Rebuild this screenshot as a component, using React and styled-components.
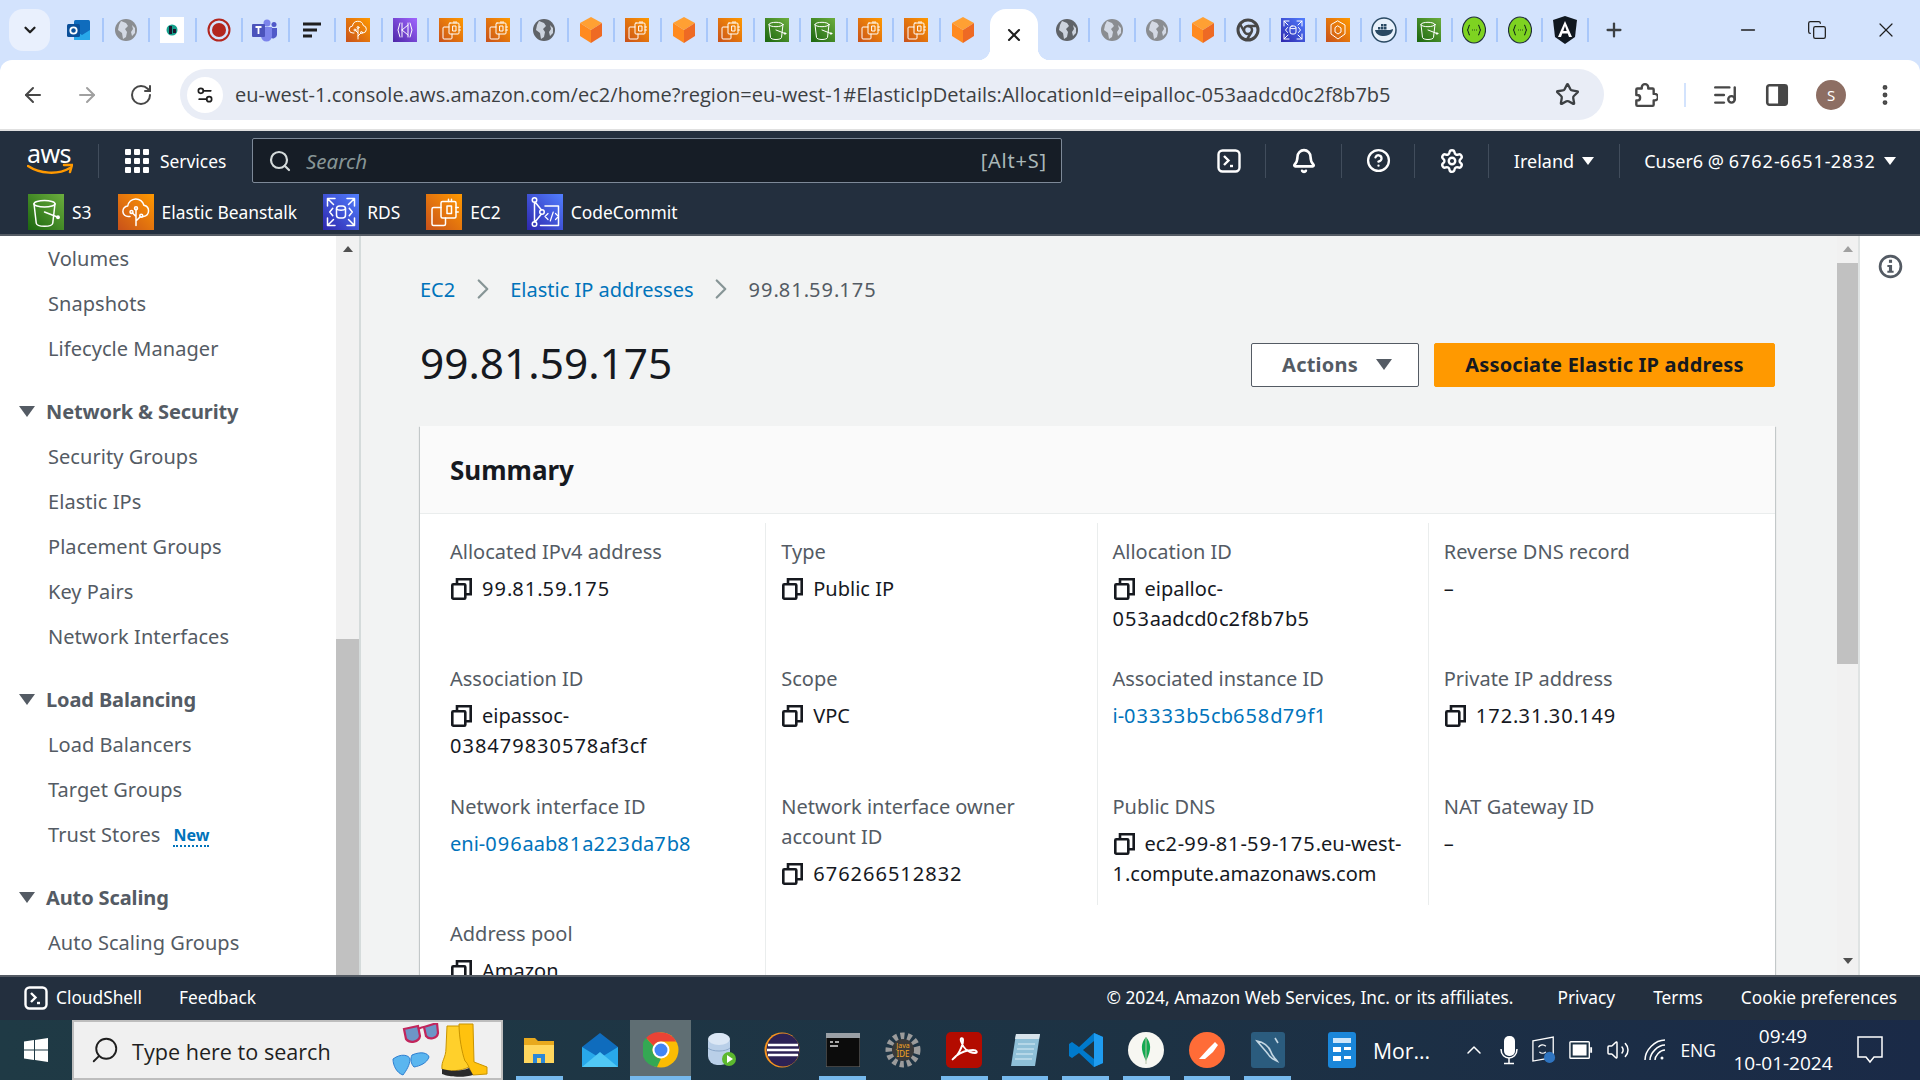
import React, { useId } from "react"
import styled, { createGlobalStyle } from "styled-components"
import {
  ArrowLeft,
  ArrowRight,
  Bell,
  ChevronDown,
  ChevronRight,
  ChevronUp,
  CircleHelp,
  Minus,
  MoreVertical,
  Plus,
  RotateCw,
  Search,
  Settings,
  Settings2,
  Star,
  Volume2,
  X,
  Copy,
  ListMusic,
} from "lucide-react"

const UI_FONT = `"Noto Sans", "Open Sans", sans-serif`
const CHROME_FONT = `"Open Sans", "Noto Sans", sans-serif`

const GlobalStyle = createGlobalStyle`
  html, body { margin: 0; padding: 0; background: #d3e3fd; }
  * { box-sizing: border-box; }
`

const Page = styled.div`
  width: 1920px;
  height: 1080px;
  overflow: hidden;
  display: flex;
  flex-direction: column;
  font-family: ${UI_FONT};
  background: #d3e3fd;
`

/* browser tab strip */
const TabStrip = styled.div`
  height: 60px;
  flex: none;
  display: flex;
  align-items: flex-start;
  padding: 9px 0 0 9px;
`
const TabMenu = styled.div`
  width: 41px;
  height: 42px;
  border-radius: 14px;
  background: #e9f0fd;
  margin-right: 7px;
  display: flex;
  align-items: center;
  justify-content: center;
  color: #1f1f1f;
`
const TabGroup = styled.div`
  display: flex;
  height: 42px;
  align-items: center;
`
const TabItem = styled.div`
  position: relative;
  width: ${(p) => p.$pitch}px;
  height: 24px;
  display: flex;
  align-items: center;
  justify-content: center;
  border-right: 2px solid #a8c7fa;
  &:last-child {
    border-right-color: ${(p) => (p.$edge ? "#a8c7fa" : "transparent")};
  }
`
const ActiveTab = styled.div`
  position: relative;
  width: 48px;
  height: 51px;
  margin: 0 7px 0 3px;
  background: #fff;
  border-radius: 16px 16px 0 0;
  display: flex;
  align-items: center;
  justify-content: center;
  color: #1f1f1f;
  &::before,
  &::after {
    content: "";
    position: absolute;
    bottom: 0;
    width: 12px;
    height: 12px;
  }
  &::before {
    left: -12px;
    background: radial-gradient(circle at 0 0, transparent 12px, #fff 12.5px);
  }
  &::after {
    right: -12px;
    background: radial-gradient(circle at 100% 0, transparent 12px, #fff 12.5px);
  }
`
const NewTab = styled.div`
  margin-left: 14px;
  height: 42px;
  display: flex;
  align-items: center;
  color: #3c4043;
`
const WindowButtons = styled.div`
  margin-left: auto;
  height: 42px;
  display: flex;
  align-items: center;
  gap: 47.5px;
  padding-right: 22px;
  color: #1f1f1f;
`

/* browser toolbar */
const Toolbar = styled.div`
  height: 71px;
  flex: none;
  background: #fff;
  border-radius: 12px 12px 0 0;
  border-bottom: 2px solid #e0e0e0;
  display: flex;
  align-items: center;
  padding: 0 0 0 21px;
  color: #474747;
`
const NavArrows = styled.div`
  width: 159px;
  display: flex;
  align-items: center;
  gap: 30px;
`
const UrlPill = styled.div`
  width: 1424px;
  height: 51px;
  border-radius: 26px;
  background: #e9edf6;
  display: flex;
  align-items: center;
  padding: 0 24px 0 7px;
`
const SiteBadge = styled.div`
  width: 36px;
  height: 36px;
  border-radius: 50%;
  background: #fff;
  display: flex;
  align-items: center;
  justify-content: center;
  margin-right: 12px;
  color: #1f1f1f;
`
const UrlText = styled.div`
  flex: 1;
  font-family: ${CHROME_FONT};
  font-size: 20px;
  letter-spacing: 0.03px;
  color: #3c4043;
  white-space: nowrap;
`
const ToolGroup = styled.div`
  display: flex;
  align-items: center;
  padding-left: 28px;
  gap: 26px;
  color: #474747;
`
const ToolSep = styled.div`
  width: 2px;
  height: 24px;
  background: #d3e3fd;
`
const Avatar = styled.div`
  width: 30px;
  height: 30px;
  border-radius: 50%;
  background: #8d6e63;
  color: #fff;
  font-size: 15px;
  display: flex;
  align-items: center;
  justify-content: center;
`

/* aws console nav */
const ConsoleNav = styled.div`
  flex: none;
  height: 105px;
  background: #232f3e;
  border-bottom: 2px solid #545b64;
  color: #fff;
`
const NavTop = styled.div`
  height: 59px;
  display: flex;
  align-items: center;
  padding: 0 0 0 27px;
`
const LogoBox = styled.div`
  width: 72px;
  height: 34px;
  display: flex;
  flex-direction: column;
  border-right: 1px solid #414d5c;
`
const LogoWord = styled.span`
  font-size: 25px;
  line-height: 19px;
  letter-spacing: -0.6px;
  color: #fff;
`
const ServicesButton = styled.div`
  width: 153px;
  display: flex;
  align-items: center;
  gap: 11px;
  padding-left: 26px;
  font-size: 17.4px;
  white-space: nowrap;
`
const SearchBox = styled.div`
  width: 810px;
  height: 45px;
  background: #161d26;
  border: 1px solid #7d8998;
  border-radius: 2px;
  display: flex;
  align-items: center;
  padding: 0 14px 0 15px;
  gap: 14px;
  color: #d5dbdb;
`
const SearchHint = styled.span`
  flex: 1;
  font-style: italic;
  font-size: 20.5px;
  color: #879596;
`
const SearchKeys = styled.span`
  font-size: 20px;
  letter-spacing: 0.8px;
  color: #aab7b8;
`
const NavRight = styled.div`
  margin-left: auto;
  display: flex;
  align-items: center;
  height: 36px;
`
const NavCell = styled.div`
  height: 34px;
  width: ${(p) => p.$w}px;
  display: flex;
  align-items: center;
  justify-content: center;
  gap: 8px;
  font-size: 18px;
  white-space: nowrap;
  border-right: ${(p) => (p.$last ? "none" : "1px solid #414d5c")};
`
const Caret = styled.span`
  display: inline-block;
  width: 0;
  height: 0;
  border-left: ${(p) => p.$s || 7}px solid transparent;
  border-right: ${(p) => p.$s || 7}px solid transparent;
  border-top: ${(p) => (p.$s || 7) * 1.45}px solid ${(p) => p.$c || "#fff"};
`
const Favorites = styled.div`
  height: 44px;
  display: flex;
  align-items: flex-start;
  padding: 4px 0 0 28px;
`
const Favorite = styled.div`
  display: flex;
  align-items: center;
  gap: 8px;
  margin-right: 26px;
  font-size: 17.4px;
  height: 36px;
  white-space: nowrap;
`

/* page body */
const Body = styled.div`
  flex: 1;
  min-height: 0;
  display: flex;
  background: #f2f3f3;
`
const Sidebar = styled.nav`
  width: 336px;
  flex: none;
  background: #fff;
  overflow: hidden;
  color: #545b64;
  font-size: 20px;
`
const SideItem = styled.div`
  height: 45px;
  display: flex;
  align-items: center;
  padding-left: 48px;
  gap: 13px;
  letter-spacing: 0.05px;
  white-space: nowrap;
`
const SideHead = styled.div`
  height: 45px;
  margin-top: 18px;
  display: flex;
  align-items: center;
  padding-left: 19px;
  gap: 11px;
  font-weight: 700;
  letter-spacing: -0.12px;
  white-space: nowrap;
`
const NewBadge = styled.span`
  color: #0073bb;
  font-size: 16px;
  font-weight: 700;
  border-bottom: 2px dotted #0073bb;
  line-height: 19px;
  margin-top: 4px;
`
const ScrollTrack = styled.div`
  width: ${(p) => p.$w}px;
  flex: none;
  background: ${(p) => p.$bg};
  border-right: ${(p) => p.$line};
  display: flex;
  flex-direction: column;
  align-items: center;
  padding-top: 10px;
`
const ScrollUp = styled.span`
  width: 0;
  height: 0;
  border-left: 5px solid transparent;
  border-right: 5px solid transparent;
  border-bottom: 6px solid ${(p) => p.$c};
`
const ScrollDown = styled.span`
  width: 0;
  height: 0;
  margin-top: auto;
  margin-bottom: 11px;
  border-left: 5px solid transparent;
  border-right: 5px solid transparent;
  border-top: 6px solid #505050;
`
const ScrollThumb = styled.div`
  width: 100%;
  flex: none;
  height: ${(p) => p.$h}px;
  margin-top: ${(p) => p.$top}px;
  background: #c1c1c1;
`
const Main = styled.main`
  flex: 1;
  min-width: 0;
  overflow: hidden;
  padding: 0 62px 0 59px;
`
const Breadcrumbs = styled.div`
  height: 30px;
  margin-top: 38px;
  display: flex;
  align-items: center;
  gap: 10.5px;
  font-size: 20px;
  color: #545b64;
`
const Crumb = styled.a`
  color: #0073bb;
`
const HeaderRow = styled.div`
  height: 44px;
  margin-top: 39px;
  display: flex;
  align-items: center;
`
const Title = styled.h1`
  margin: -5px 0 0;
  flex: 1;
  font-size: 42.4px;
  font-weight: 400;
  color: #16191f;
`
const Button = styled.div`
  height: 44px;
  display: flex;
  align-items: center;
  justify-content: center;
  gap: 18px;
  padding: 0 0 2px ${(p) => (p.$primary ? 0 : 4)}px;
  border-radius: 2px;
  font-size: 20px;
  font-weight: 700;
  letter-spacing: 0.2px;
  width: ${(p) => p.$w}px;
  margin-left: 15px;
  background: ${(p) => (p.$primary ? "#ff9900" : "#fff")};
  color: ${(p) => (p.$primary ? "#16191f" : "#545b64")};
  border: 1px solid ${(p) => (p.$primary ? "#ff9900" : "#545b64")};
`
const Card = styled.section`
  margin-top: 39px;
  background: #fff;
  box-shadow: 0 1px 1px 0 rgba(0, 28, 36, 0.3), 1px 1px 1px 0 rgba(0, 28, 36, 0.15), -1px 1px 1px 0 rgba(0, 28, 36, 0.15);
`
const CardHead = styled.header`
  height: 88px;
  display: flex;
  align-items: center;
  padding-left: 30px;
  background: #fafafa;
  border-bottom: 1px solid #eaeded;
  font-size: 26px;
  font-weight: 700;
  color: #16191f;
`
const DetailGrid = styled.div`
  display: grid;
  grid-template-columns: repeat(4, 331.25px);
  padding: 9px 15px 0;
`
const Cell = styled.div`
  padding: 14px 15px 0;
  height: 127.25px;
  font-size: 20px;
  line-height: 30px;
  color: #16191f;
  border-right: ${(p) => (p.$last ? "none" : "1px solid #eaeded")};
`
const Label = styled.div`
  color: #545b64;
  margin-bottom: 7px;
`
const Value = styled.div``
const CopyGlyph = styled.span`
  display: inline-flex;
  vertical-align: -4px;
  margin: 0 10px 0 1px;
`
const ValueLink = styled.a`
  color: #0073bb;
`
const Num = styled.span`
  letter-spacing: 1px;
`
const RightRail = styled.aside`
  width: 62px;
  flex: none;
  background: #fff;
  border-left: 2px solid #dfe3e3;
  display: flex;
  justify-content: center;
  padding-top: 18px;
`

/* console footer */
const Footer = styled.footer`
  flex: none;
  height: 45px;
  background: #232f3e;
  border-top: 2px solid #545b64;
  color: #fff;
  font-size: 17.3px;
  display: flex;
  align-items: center;
  padding: 0 23px 2px 24px;
`
const FooterShell = styled.div`
  display: flex;
  align-items: center;
  gap: 8px;
  margin-right: 37px;
`
const FooterLinks = styled.div`
  margin-left: auto;
  display: flex;
  align-items: center;
  gap: 38px;
`
const Copyright = styled.span`
  margin-right: 6px;
`

/* windows taskbar */
const Taskbar = styled.div`
  flex: none;
  height: 60px;
  background: linear-gradient(90deg, #1f3a45 0%, #1d3244 60%, #1a2a47 100%);
  display: flex;
  align-items: center;
  color: #fff;
`
const StartCell = styled.div`
  width: 72px;
  display: flex;
  justify-content: center;
`
const TaskSearch = styled.div`
  width: 431px;
  height: 60px;
  background: #f0f0f0;
  border: 2px solid #bdbdbd;
  display: flex;
  align-items: center;
  padding: 0 11px 0 16px;
  color: #1f1f1f;
  font-size: 21.6px;
  margin-right: 6px;
`
const TaskSearchText = styled.span`
  flex: 1;
  margin-left: 12px;
  padding-top: 2px;
  font-family: ${CHROME_FONT};
  white-space: nowrap;
`
const TaskSlot = styled.div`
  position: relative;
  width: 60.7px;
  height: 60px;
  display: flex;
  align-items: center;
  justify-content: center;
  background: ${(p) => (p.$active ? "#5f6e73" : "transparent")};
  &::after {
    content: "";
    display: ${(p) => (p.$running ? "block" : "none")};
    position: absolute;
    left: ${(p) => (p.$active ? 0 : 7)}px;
    right: ${(p) => (p.$active ? 0 : 7)}px;
    bottom: 0;
    height: 4px;
    background: #76b9ed;
  }
`
const NewsWidget = styled.div`
  margin-left: 30px;
  display: flex;
  align-items: center;
  gap: 15px;
  font-family: ${CHROME_FONT};
  font-size: 21.2px;
  white-space: nowrap;
`
const Tray = styled.div`
  margin-left: auto;
  display: flex;
  align-items: center;
  gap: 13px;
  padding-right: 35px;
`
const TrayText = styled.span`
  font-family: ${CHROME_FONT};
  font-size: 17.5px;
`
const Clock = styled.div`
  width: 100px;
  margin: 0 9px 0 4px;
  text-align: center;
  font-family: ${CHROME_FONT};
  font-size: 19px;
  line-height: 27px;
`

function Tile({ colors, size = 24, children }) {
  const id = useId()
  return (
    <svg width={size} height={size} viewBox="0 0 24 24">
      <defs>
        <linearGradient id={id} x1="0" y1="1" x2="1" y2="0">
          <stop offset="0" stopColor={colors[0]} />
          <stop offset="1" stopColor={colors[1]} />
        </linearGradient>
      </defs>
      <rect width="24" height="24" fill={`url(#${id})`} />
      <g fill="none" stroke="#fff" strokeWidth="1" strokeLinecap="round" strokeLinejoin="round">
        {children}
      </g>
    </svg>
  )
}

const ORANGE = ["#c8511b", "#ff9900"]
const GREEN = ["#1b660f", "#6cae3e"]
const BLUE = ["#2e27ad", "#527fff"]
const PURPLE = ["#4d27a8", "#a166ff"]

const Ec2Tile = ({ size }) => (
  <Tile colors={ORANGE} size={size}>
    <rect x="10" y="5" width="10" height="11" rx="1" />
    <path d="M14 8h3v5h-3zM15 5V3.500M17 5V3.500M20 9h1.500M20 12h1.500" />
    <path d="M10 9H5a1 1 0 0 0-1 1v10a1 1 0 0 0 1 1h7a1 1 0 0 0 1-1v-4" />
  </Tile>
)
const S3Tile = ({ size }) => (
  <Tile colors={GREEN} size={size}>
    <ellipse cx="11" cy="6.500" rx="7" ry="2.200" />
    <path d="M4 6.500l1.500 13c.2 1.200 2.500 2 5.500 2s5.300-.8 5.500-2L18 6.500" />
    <path d="M11 12l9 3.500" />
    <circle cx="20" cy="15.500" r=".8" fill="#fff" />
  </Tile>
)
const BeanstalkTile = ({ size }) => (
  <Tile colors={ORANGE} size={size}>
    <path d="M8 15H7a3.500 3.500 0 0 1-.5-7 5.500 5.500 0 0 1 10.800-.5A3.800 3.800 0 0 1 17 15h-1" />
    <path d="M12 21V10M12 15l-2.500-2.500M12 18l3-3" />
    <circle cx="12" cy="9.500" r="1" />
    <circle cx="9" cy="12" r="1" />
    <circle cx="15.500" cy="14.500" r="1" />
  </Tile>
)
const RdsTile = ({ size }) => (
  <Tile colors={BLUE} size={size}>
    <path d="M3 8V3h5M3 3l4 4M21 8V3h-5M21 3l-4 4M3 16v5h5M3 21l4-4M21 16v5h-5M21 21l-4-4" />
    <rect x="9" y="8" width="6" height="8" rx="2" />
    <path d="M9 10c1 1 5 1 6 0M6.500 9.500L4.500 12l2 2.500M17.500 9.500l2 2.500-2 2.500" />
  </Tile>
)
const CommitTile = ({ size }) => (
  <Tile colors={BLUE} size={size}>
    <circle cx="5" cy="4" r="1.500" />
    <circle cx="5" cy="20" r="1.500" />
    <circle cx="10" cy="12" r="1.500" />
    <path d="M5 5.500v13M5.500 5.500l4 5M9.500 13.500l-4 5M12 8h9v13h-12" />
    <path d="M14 13l-2 2 2 2M19 13l2 2-2 2M17.500 12l-2 6" strokeWidth=".8" />
  </Tile>
)
const KinesisTile = () => (
  <Tile colors={PURPLE}>
    <path d="M7 5L5 12l2 7M17 5l2 7-2 7M9 5v14M15 5v14M9 12l6-5M9 12l6 5" />
  </Tile>
)
const EcsTile = () => (
  <Tile colors={ORANGE}>
    <path d="M12 3l7 4v9l-7 5-7-5V7z" />
    <path d="M12 8l3 2v4l-3 2-3-2v-4z" />
  </Tile>
)

const GlobeIcon = ({ shade }) => (
  <svg width="24" height="24" viewBox="0 0 24 24">
    <circle cx="12" cy="12" r="11" fill={shade} />
    <path d="M7 3l5 2 2 3-3 3 2 3-1 5-3 2-1-6-4-3 1-5zM18 7l3 3v5l-3 3-1-4 2-3z" fill="#dfe6f2" opacity=".85" />
  </svg>
)
const CubeIcon = () => (
  <svg width="24" height="28" viewBox="0 0 24 28">
    <path d="M12 1l11 6-11 7L1 7z" fill="#ffa033" />
    <path d="M1 7l11 7v13L1 20z" fill="#ff8a1f" />
    <path d="M23 7L12 14v13l11-7z" fill="#ee6a24" />
  </svg>
)
const OutlookIcon = () => (
  <svg width="24" height="24" viewBox="0 0 24 24">
    <rect x="7" y="2" width="16" height="20" rx="1.500" fill="#0f6cbd" />
    <path d="M7 12l8 5 8-5v9a1 1 0 0 1-1 1H8a1 1 0 0 1-1-1z" fill="#28a8ea" />
    <rect x="0" y="6" width="13" height="13" rx="1.500" fill="#0a4f99" />
    <circle cx="6.500" cy="12.500" r="3.200" fill="none" stroke="#fff" strokeWidth="1.800" />
  </svg>
)
const QrIcon = () => (
  <svg width="24" height="26" viewBox="0 0 24 26">
    <rect width="24" height="26" fill="#fff" />
    <circle cx="12" cy="13" r="5.500" fill="#14a08c" />
    <path d="M9 9h3v8H9zM13 12h3v4h-3z" fill="#1a1a2e" />
  </svg>
)
const RecordIcon = () => (
  <svg width="24" height="24" viewBox="0 0 24 24">
    <circle cx="12" cy="12" r="10.500" fill="none" stroke="#b3261e" strokeWidth="2" />
    <circle cx="12" cy="12" r="7" fill="#b3261e" />
  </svg>
)
const TeamsIcon = () => (
  <svg width="26" height="24" viewBox="0 0 26 24">
    <circle cx="15" cy="5" r="3.500" fill="#7b83eb" />
    <circle cx="22" cy="6.500" r="2.500" fill="#5059c9" />
    <path d="M18 10h7v7a4 4 0 0 1-7 2z" fill="#5059c9" />
    <path d="M9 9h11v9a5 5 0 0 1-11 0z" fill="#7b83eb" />
    <rect x="0" y="6" width="13" height="13" rx="1" fill="#4b53bc" />
    <path d="M3.500 9h6M6.500 9v7" stroke="#fff" strokeWidth="1.800" />
  </svg>
)
const LinesIcon = () => (
  <svg width="24" height="24" viewBox="0 0 24 24">
    <path d="M3 6h18M3 12h14M3 18h9" stroke="#1f1f1f" strokeWidth="3" />
  </svg>
)
const ChromeMono = () => (
  <svg width="24" height="24" viewBox="0 0 24 24">
    <circle cx="12" cy="12" r="10" fill="none" stroke="#474747" strokeWidth="3" />
    <circle cx="12" cy="12" r="4" fill="none" stroke="#474747" strokeWidth="2.500" />
    <path d="M12 8h9M8.500 14L4 6M15.500 14L11 21.500" stroke="#474747" strokeWidth="2.500" />
  </svg>
)
const DockerTab = () => (
  <svg width="26" height="26" viewBox="0 0 26 26">
    <circle cx="13" cy="13" r="12" fill="#e8f1fb" stroke="#2a4a63" strokeWidth="1.500" />
    <path d="M4 13h15c1 0 2-1 3-1 0 3-3 7-9 7-5 0-8-2-9-6z" fill="#2a4a63" />
    <path d="M7 10h2.500v2.500H7zM10 10h2.500v2.500H10zM13 10h2.500v2.500H13zM10 7h2.500v2.500H10zM13 7h2.500v2.500H13z" fill="#2a4a63" />
  </svg>
)
const BracesGreen = () => (
  <svg width="24" height="28" viewBox="0 0 24 28">
    <ellipse cx="12" cy="14" rx="11.500" ry="13" fill="#7ed321" stroke="#1f2d3d" strokeWidth="1.200" />
    <path d="M8 9c-2 0-1 5-3 5 2 0 1 5 3 5M16 9c2 0 1 5 3 5-2 0-1 5-3 5M10 14h.8M12 14h.8M14 14h.8" fill="none" stroke="#16301a" strokeWidth="1.200" />
  </svg>
)
const AngularIcon = () => (
  <svg width="24" height="28" viewBox="0 0 24 28">
    <path d="M12 0l12 4-2 17-10 7-10-7L0 4z" fill="#101820" />
    <path d="M12 5l7 16h-3l-1.300-3.500H9.300L8 21H5zM12 10l-1.700 5h3.400z" fill="#fff" />
  </svg>
)

const tabsBefore = [
  <OutlookIcon />, <GlobeIcon shade="#8a8d91" />, <QrIcon />, <RecordIcon />, <TeamsIcon />, <LinesIcon />,
  <BeanstalkTile />, <KinesisTile />, <Ec2Tile />, <Ec2Tile />, <GlobeIcon shade="#5f6368" />, <CubeIcon />,
  <Ec2Tile />, <CubeIcon />, <Ec2Tile />, <S3Tile />, <S3Tile />, <Ec2Tile />, <Ec2Tile />, <CubeIcon />,
]
const tabsAfter = [
  <GlobeIcon shade="#5f6368" />, <GlobeIcon shade="#8a8d91" />, <GlobeIcon shade="#8a8d91" />, <CubeIcon />,
  <ChromeMono />, <RdsTile />, <EcsTile />, <DockerTab />, <S3Tile />, <BracesGreen />, <BracesGreen />, <AngularIcon />,
]

const AwsSmile = () => (
  <svg width="46" height="15" viewBox="0 0 46 15">
    <path d="M1 3c12 8 30 9 42 2" fill="none" stroke="#ff9900" strokeWidth="2.500" strokeLinecap="round" />
    <path d="M37 2l8 0-2 7" fill="none" stroke="#ff9900" strokeWidth="2.500" strokeLinecap="round" />
  </svg>
)
const GridIcon = () => (
  <svg width="24" height="24" viewBox="0 0 24 24" fill="#fff">
    {[0, 9, 18].map((y) =>
      [0, 9, 18].map((x) => <rect key={`${x}-${y}`} x={x} y={y} width="6" height="6" rx="1" />)
    )}
  </svg>
)
const ShellIcon = () => (
  <svg width="24" height="24" viewBox="0 0 24 24" fill="none" stroke="#fff">
    <rect x="1.500" y="1.500" width="21" height="21" rx="4" strokeWidth="2.400" />
    <path d="M7 7l4.500 4.500L7 16" strokeWidth="2.400" />
    <path d="M13 17h3" strokeWidth="2.400" />
  </svg>
)
const PuzzleIcon = () => (
  <svg width="26" height="26" viewBox="0 0 24 24" fill="none" stroke="#474747" strokeWidth="2.200" strokeLinejoin="round">
    <path d="M5 6h4V5a3 3 0 0 1 6 0v1h4a1 1 0 0 1 1 1v4h1a3 3 0 0 1 0 6h-1v4a1 1 0 0 1-1 1H5a1 1 0 0 1-1-1v-4h1a2.500 2.500 0 0 0 0-5H4V7a1 1 0 0 1 1-1z" />
  </svg>
)
const SidePanelIcon = () => (
  <svg width="26" height="26" viewBox="0 0 24 24">
    <rect x="3" y="3" width="18" height="18" rx="2" fill="none" stroke="#474747" strokeWidth="2.400" />
    <rect x="13" y="3" width="8" height="18" fill="#474747" />
  </svg>
)
const InfoIcon = () => (
  <svg width="25" height="25" viewBox="0 0 24 24">
    <circle cx="12" cy="12" r="10" fill="none" stroke="#545b64" strokeWidth="2.600" />
    <rect x="10.500" y="5.500" width="3" height="3" fill="#545b64" />
    <path d="M9 10.500h4.500V16H15v2H9v-2h1.500v-3.500H9z" fill="#545b64" />
  </svg>
)
const CopyValueIcon = () => (
  <svg width="21" height="22" viewBox="0 0 21 22" fill="none" stroke="#16191f" strokeWidth="2.600">
    <rect x="1.300" y="6.300" width="13" height="14.400" rx="1" />
    <path d="M6 6V1.300h13.700v15H14.500" />
  </svg>
)

const FolderIcon = () => (
  <svg width="34" height="34" viewBox="0 0 34 34">
    <path d="M2 5h11l3 3h16v22H2z" fill="#e8a91d" />
    <path d="M2 12h30v18H2z" fill="#ffd75e" />
    <path d="M11 30v-9h12v9h-4v-5h-4v5z" fill="#2b88d8" />
  </svg>
)
const MailIcon = () => (
  <svg width="36" height="36" viewBox="0 0 36 36">
    <path d="M18 1L0 15v20h36V15z" fill="#0f6cbd" />
    <path d="M0 15l18 11 18-11v20H0z" fill="#28a8ea" />
    <path d="M0 35l18-15 18 15z" fill="#50c8f5" />
  </svg>
)
const ChromeIcon = () => (
  <svg width="36" height="36" viewBox="0 0 36 36">
    <circle cx="18" cy="18" r="17.500" fill="#fbbc04" />
    <path d="M18 .5A17.500 17.500 0 0 1 33.200 9.500H18a8.500 8.500 0 0 0-7.500 4.500L3 6A17.500 17.500 0 0 1 18 .5z" fill="#ea4335" />
    <path d="M3 6l7.500 8a8.500 8.500 0 0 0 7.500 12.500L14 35A17.500 17.500 0 0 1 3 6z" fill="#34a853" />
    <circle cx="18" cy="18" r="8.500" fill="#fff" />
    <circle cx="18" cy="18" r="6.500" fill="#4285f4" />
  </svg>
)
const DbIcon = () => (
  <svg width="30" height="38" viewBox="0 0 30 38">
    <rect x="2" y="2" width="22" height="32" rx="9" fill="#b9cfe8" />
    <ellipse cx="13" cy="8" rx="11" ry="6" fill="#dbe7f5" />
    <path d="M2 17c4 4 18 4 22 0" stroke="#8aa7c9" fill="none" />
    <circle cx="23" cy="28" r="7" fill="#5cb82e" />
    <path d="M21 24v8l6-4z" fill="#fff" />
  </svg>
)
const EclipseIcon = () => (
  <svg width="36" height="36" viewBox="0 0 36 36">
    <circle cx="18" cy="18" r="17.500" fill="#f7941e" />
    <circle cx="19" cy="18" r="16.500" fill="#2c2255" />
    <path d="M4 13h30M3 18h32M4 23h30" stroke="#fff" strokeWidth="2.500" />
  </svg>
)
const CmdIcon = () => (
  <svg width="34" height="34" viewBox="0 0 34 34">
    <rect width="34" height="34" fill="#0c0c0c" stroke="#777" />
    <rect width="34" height="5" fill="#9aa0a6" />
    <path d="M4 9h3M9 9h4M4 13h8" stroke="#ddd" strokeWidth="1.500" />
  </svg>
)
const JavaGear = () => (
  <svg width="38" height="38" viewBox="0 0 38 38">
    <circle cx="19" cy="19" r="14" fill="none" stroke="#9b9b9b" strokeWidth="7" strokeDasharray="4 3" />
    <circle cx="19" cy="19" r="11" fill="#3a3a3a" />
    <text x="19" y="17" textAnchor="middle" fontSize="7" fill="#f5a623" fontFamily="Noto Sans, sans-serif">Java</text>
    <text x="19" y="26" textAnchor="middle" fontSize="8" fill="#f5a623" fontFamily="Noto Sans, sans-serif">IDE</text>
  </svg>
)
const AdobeIcon = () => (
  <svg width="36" height="36" viewBox="0 0 36 36">
    <rect width="36" height="36" rx="5" fill="#b30b00" />
    <path d="M7 27c5-3 10-13 10-19 0-3-3-2-2 1 2 7 7 12 14 12 3 0 2-3-2-3-6 0-13 3-17 6-3 3-4 4-3 3z" fill="none" stroke="#fff" strokeWidth="2" />
  </svg>
)
const NotepadIcon = () => (
  <svg width="32" height="36" viewBox="0 0 32 36">
    <path d="M7 2h24l-5 32H2z" fill="#8fc0d8" />
    <path d="M7 2h24l-1 5H6z" fill="#d8e4ec" />
    <path d="M9 12h17M8 17h17M7 22h17M6 27h17" stroke="#dbeef7" />
  </svg>
)
const VsCodeIcon = () => (
  <svg width="36" height="36" viewBox="0 0 36 36">
    <path d="M26 1l9 4v26l-9 4-15-14-7 5-3-2v-12l3-2 7 5z" fill="#007acc" />
    <path d="M26 9L15 18l11 9z" fill="#1f3644" />
    <path d="M26 1l9 4v26l-9 4z" fill="#1f9cf0" />
  </svg>
)
const MongoIcon = () => (
  <svg width="36" height="36" viewBox="0 0 36 36">
    <circle cx="18" cy="18" r="18" fill="#f7f7f2" />
    <path d="M18 5c5 6 6 12 0 24-6-12-5-18 0-24z" fill="#13aa52" />
    <path d="M18 5v27" stroke="#b8c4a8" strokeWidth="1" />
  </svg>
)
const PostmanIcon = () => (
  <svg width="36" height="36" viewBox="0 0 36 36">
    <circle cx="18" cy="18" r="18" fill="#ff6c37" />
    <path d="M10 27l10-11 4 4-8 7M20 16l6-6 3 3-5 7" fill="#fff" />
  </svg>
)
const MysqlIcon = () => (
  <svg width="34" height="36" viewBox="0 0 34 36">
    <rect width="34" height="36" rx="3" fill="#2b5c7e" />
    <path d="M6 9c6 1 12 5 14 11 1 4 4 6 6 9-4-2-7-3-9-7-3-4-7-8-11-13zM24 6l3 5" fill="none" stroke="#c4d7e3" strokeWidth="1.600" />
  </svg>
)
const NewsIcon = () => (
  <svg width="30" height="36" viewBox="0 0 30 36">
    <rect width="28" height="36" rx="3" fill="#1a86d9" />
    <rect x="5" y="6" width="18" height="5" fill="#cde6fa" />
    <rect x="5" y="15" width="8" height="5" fill="#fff" />
    <rect x="5" y="24" width="8" height="5" fill="#fff" />
    <rect x="16" y="15" width="7" height="3" fill="#fff" />
    <rect x="16" y="24" width="7" height="3" fill="#fff" />
  </svg>
)
const WindowsLogo = () => (
  <svg width="24" height="24" viewBox="0 0 24 24" fill="#fff">
    <path d="M0 3.500l10-1.500v9.500H0zM11 2l13-2v11.500H11zM0 12.500h10V22L0 20.500zM11 12.500h13V24l-13-2z" />
  </svg>
)
const SummerArt = () => (
  <svg width="98" height="54" viewBox="0 0 98 54">
    <path d="M12 6l14-3 2 10c-1 6-10 8-14 3zM32 4l13-4 1 10c-1 6-9 7-12 3z" fill="#6d95c7" stroke="#c2255c" strokeWidth="2.200" />
    <path d="M26 6c2-1 4-2 6-2" stroke="#c2255c" strokeWidth="2" fill="none" />
    <path d="M1 36c8-6 16-4 17 0 0 6-4 12-7 16C5 50 1 43 1 36zM20 32c9-4 16-2 17 2-2 6-9 9-15 10-3-3-4-8-2-12z" fill="#5bb6ef" stroke="#2f7fd0" />
    <path d="M55 3h13c0 14 2 24 9 33v8c-8 4-20 5-27 2-1-8 4-11 4-21z" fill="#ffd02b" stroke="#c99400" />
    <path d="M67 1h14l1 38 13 5v7l-14 1c-3-4-5-12-8-14-3-8-6-24-6-37z" fill="#ffc20e" stroke="#c99400" />
    <path d="M50 46c10 3 20 2 27-1l4 7c-9 3-24 2-31-1z" fill="#2b2b2b" />
  </svg>
)
const MicIcon = () => (
  <svg width="20" height="30" viewBox="0 0 20 30" fill="#fff">
    <rect x="5" y="1" width="11" height="20" rx="5" />
    <path d="M2 14c0 12 16 12 16 0" fill="none" stroke="#fff" strokeWidth="1.500" />
    <path d="M10 23v5M5 28.500h10" stroke="#fff" strokeWidth="1.500" />
  </svg>
)
const SyncTray = () => (
  <svg width="24" height="30" viewBox="0 0 26 30" fill="none" stroke="#fff" strokeWidth="1.400">
    <path d="M1 5l22-4v22L1 27z" />
    <path d="M7 12a5 5 0 0 1 8-1M15 17a5 5 0 0 1-7 0" />
    <circle cx="19" cy="23" r="6" fill="#2f74c0" stroke="none" />
  </svg>
)
const BatteryTray = () => (
  <svg width="24" height="20" viewBox="0 0 26 20">
    <rect x="1" y="1" width="21" height="18" rx="1" fill="#1d3244" stroke="#fff" strokeWidth="1.500" />
    <rect x="4" y="4" width="15" height="12" fill="#fff" />
    <rect x="23" y="7" width="2" height="6" fill="#fff" />
  </svg>
)
const WifiTray = () => (
  <svg width="24" height="24" viewBox="0 0 24 24" fill="none" stroke="#fff" strokeWidth="1.500">
    <path d="M2 22C2 12 12 2 22 2M7 22c0-7 8-15 15-15M12 22c0-4 5-10 10-10" />
    <circle cx="19" cy="20" r="1.500" fill="#fff" stroke="none" />
  </svg>
)
const BubbleTray = () => (
  <svg width="30" height="30" viewBox="0 0 30 30" fill="none" stroke="#fff" strokeWidth="1.500">
    <path d="M3 2h24v20h-8l-4 5-4-5H3z" />
  </svg>
)

// the digits of the reference font run wider than the ones we have
const withNums = (text) =>
  String(text)
    .split(/(\d+)/)
    .map((part, i) => (/^\d/.test(part) ? <Num key={i}>{part}</Num> : part))

function CopyValue({ children }) {
  return (
    <Value>
      <CopyGlyph>
        <CopyValueIcon />
      </CopyGlyph>
      {withNums(children)}
    </Value>
  )
}

const details = [
  { label: "Allocated IPv4 address", copy: "99.81.59.175" },
  { label: "Type", copy: "Public IP" },
  { label: "Allocation ID", copy: "eipalloc-053aadcd0c2f8b7b5" },
  { label: "Reverse DNS record", text: "–" },
  { label: "Association ID", copy: "eipassoc-038479830578af3cf" },
  { label: "Scope", copy: "VPC" },
  { label: "Associated instance ID", link: "i-03333b5cb658d79f1" },
  { label: "Private IP address", copy: "172.31.30.149" },
  { label: "Network interface ID", link: "eni-096aab81a223da7b8" },
  { label: "Network interface owner account ID", copy: "676266512832" },
  { label: "Public DNS", copy: "ec2-99-81-59-175.eu-west-1.compute.amazonaws.com" },
  { label: "NAT Gateway ID", text: "–" },
  { label: "Address pool", copy: "Amazon" },
]

const sideGroups = [
  { items: ["Volumes", "Snapshots", "Lifecycle Manager"] },
  { head: "Network & Security", items: ["Security Groups", "Elastic IPs", "Placement Groups", "Key Pairs", "Network Interfaces"] },
  { head: "Load Balancing", items: ["Load Balancers", "Target Groups", "Trust Stores"] },
  { head: "Auto Scaling", items: ["Auto Scaling Groups"] },
]

export default function App() {
  return (
    <Page>
      <GlobalStyle />
      <TabStrip>
        <TabMenu>
          <ChevronDown size={18} strokeWidth={3} />
        </TabMenu>
        <TabGroup>
          {tabsBefore.map((icon, i) => (
            <TabItem key={i} $pitch={46.5}>{icon}</TabItem>
          ))}
        </TabGroup>
        <ActiveTab>
          <X size={20} strokeWidth={2.500} />
        </ActiveTab>
        <TabGroup>
          {tabsAfter.map((icon, i) => (
            <TabItem key={i} $pitch={45.3} $edge>{icon}</TabItem>
          ))}
        </TabGroup>
        <NewTab>
          <Plus size={22} strokeWidth={2.500} />
        </NewTab>
        <WindowButtons>
          <Minus size={22} strokeWidth={1.500} />
          <Copy size={20} strokeWidth={1.500} />
          <X size={24} strokeWidth={1.200} />
        </WindowButtons>
      </TabStrip>

      <Toolbar>
        <NavArrows>
          <ArrowLeft size={24} />
          <ArrowRight size={24} color="#a0a0a0" />
          <RotateCw size={24} />
        </NavArrows>
        <UrlPill>
          <SiteBadge>
            <Settings2 size={20} />
          </SiteBadge>
          <UrlText>eu-west-1.console.aws.amazon.com/ec2/home?region=eu-west-1#ElasticIpDetails:AllocationId=eipalloc-053aadcd0c2f8b7b5</UrlText>
          <Star size={25} strokeWidth={2.200} color="#3c4043" />
        </UrlPill>
        <ToolGroup>
          <PuzzleIcon />
          <ToolSep />
          <ListMusic size={26} strokeWidth={2.200} />
          <SidePanelIcon />
          <Avatar>S</Avatar>
          <MoreVertical size={26} strokeWidth={2.500} />
        </ToolGroup>
      </Toolbar>

      <ConsoleNav>
        <NavTop>
          <LogoBox>
            <LogoWord>aws</LogoWord>
            <AwsSmile />
          </LogoBox>
          <ServicesButton>
            <GridIcon />
            Services
          </ServicesButton>
          <SearchBox>
            <Search size={24} strokeWidth={2.200} />
            <SearchHint>Search</SearchHint>
            <SearchKeys>[Alt+S]</SearchKeys>
          </SearchBox>
          <NavRight>
            <NavCell $w={73}>
              <ShellIcon />
            </NavCell>
            <NavCell $w={76}>
              <Bell size={26} strokeWidth={2.400} />
            </NavCell>
            <NavCell $w={73}>
              <CircleHelp size={25} strokeWidth={2.200} />
            </NavCell>
            <NavCell $w={74}>
              <Settings size={26} strokeWidth={2.200} />
            </NavCell>
            <NavCell $w={131}>
              Ireland <Caret $s={6} />
            </NavCell>
            <NavCell $w={300} $last>
              <span>Cuser6 @ {withNums("6762-6651-2832")}</span> <Caret $s={6} />
            </NavCell>
          </NavRight>
        </NavTop>
        <Favorites>
          <Favorite><S3Tile size={36} />S3</Favorite>
          <Favorite><BeanstalkTile size={36} />Elastic Beanstalk</Favorite>
          <Favorite><RdsTile size={36} />RDS</Favorite>
          <Favorite><Ec2Tile size={36} />EC2</Favorite>
          <Favorite><CommitTile size={36} />CodeCommit</Favorite>
        </Favorites>
      </ConsoleNav>

      <Body>
        <Sidebar>
          {sideGroups.map((group, i) => (
            <React.Fragment key={i}>
              {group.head && (
                <SideHead>
                  <Caret $s={8} $c="#545b64" />
                  {group.head}
                </SideHead>
              )}
              {group.items.map((item) => (
                <SideItem key={item}>
                  {item}
                  {item === "Trust Stores" && <NewBadge>New</NewBadge>}
                </SideItem>
              ))}
            </React.Fragment>
          ))}
        </Sidebar>
        <ScrollTrack $w={25} $bg="#f1f1f1" $line="2px solid #d5dbdb">
          <ScrollUp $c="#505050" />
          <ScrollThumb $top={387} $h={336} />
        </ScrollTrack>
        <Main>
          <Breadcrumbs>
            <Crumb>EC2</Crumb>
            <ChevronRight size={34} color="#879596" strokeWidth={1.600} />
            <Crumb>Elastic IP addresses</Crumb>
            <ChevronRight size={34} color="#879596" strokeWidth={1.600} />
            <span>{withNums("99.81.59.175")}</span>
          </Breadcrumbs>
          <HeaderRow>
            <Title>99.81.59.175</Title>
            <Button $w={168}>
              Actions <Caret $s={8} $c="#545b64" />
            </Button>
            <Button $primary $w={341}>Associate Elastic IP address</Button>
          </HeaderRow>
          <Card>
            <CardHead>Summary</CardHead>
            <DetailGrid>
              {details.map((d, i) => (
                <Cell key={d.label} $last={i % 4 === 3}>
                  <Label>{d.label}</Label>
                  {d.copy && <CopyValue>{d.copy}</CopyValue>}
                  {d.link && <Value><ValueLink>{withNums(d.link)}</ValueLink></Value>}
                  {d.text && <Value>{d.text}</Value>}
                </Cell>
              ))}
            </DetailGrid>
          </Card>
        </Main>
        <ScrollTrack $w={21} $bg="#f1f1f1" $line="none">
          <ScrollUp $c="#a0a0a0" />
          <ScrollThumb $top={11} $h={401} />
          <ScrollDown />
        </ScrollTrack>
        <RightRail>
          <InfoIcon />
        </RightRail>
      </Body>

      <Footer>
        <FooterShell>
          <ShellIcon />
          CloudShell
        </FooterShell>
        Feedback
        <FooterLinks>
          <Copyright>© 2024, Amazon Web Services, Inc. or its affiliates.</Copyright>
          <span>Privacy</span>
          <span>Terms</span>
          <span>Cookie preferences</span>
        </FooterLinks>
      </Footer>

      <Taskbar>
        <StartCell>
          <WindowsLogo />
        </StartCell>
        <TaskSearch>
          <Search size={30} strokeWidth={1.500} style={{ transform: "scaleX(-1)" }} />
          <TaskSearchText>Type here to search</TaskSearchText>
          <SummerArt />
        </TaskSearch>
        <TaskSlot $running><FolderIcon /></TaskSlot>
        <TaskSlot><MailIcon /></TaskSlot>
        <TaskSlot $running $active><ChromeIcon /></TaskSlot>
        <TaskSlot><DbIcon /></TaskSlot>
        <TaskSlot><EclipseIcon /></TaskSlot>
        <TaskSlot $running><CmdIcon /></TaskSlot>
        <TaskSlot><JavaGear /></TaskSlot>
        <TaskSlot $running><AdobeIcon /></TaskSlot>
        <TaskSlot $running><NotepadIcon /></TaskSlot>
        <TaskSlot $running><VsCodeIcon /></TaskSlot>
        <TaskSlot $running><MongoIcon /></TaskSlot>
        <TaskSlot $running><PostmanIcon /></TaskSlot>
        <TaskSlot $running><MysqlIcon /></TaskSlot>
        <NewsWidget>
          <NewsIcon />
          Mor...
        </NewsWidget>
        <Tray>
          <ChevronUp size={24} strokeWidth={1.500} />
          <MicIcon />
          <SyncTray />
          <BatteryTray />
          <Volume2 size={24} strokeWidth={1.500} />
          <WifiTray />
          <TrayText>ENG</TrayText>
          <Clock>
            09:49
            <br />
            10-01-2024
          </Clock>
          <BubbleTray />
        </Tray>
      </Taskbar>
    </Page>
  )
}
